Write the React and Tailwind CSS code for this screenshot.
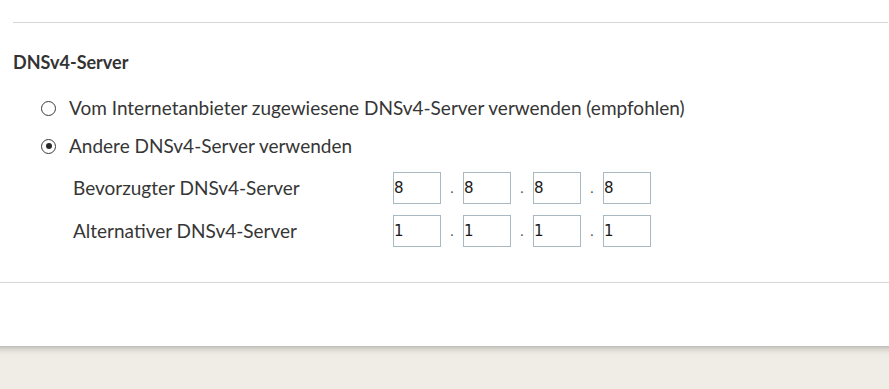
import React from "react";

const Radio = ({ checked }) => (
  <span className="flex h-[15px] w-[15px] items-center justify-center rounded-full border-[1.5px] border-[#3c3c3c]">
    {checked && <span className="h-[6px] w-[6px] rounded-full bg-[#2a2a2a]" />}
  </span>
);

const IpInput = ({ parts }) => (
  <div className="flex items-center">
    {parts.map((p, i) => (
      <React.Fragment key={i}>
        {i > 0 && <span className="w-[22px] text-center text-[14px] leading-none text-[#555]">.</span>}
        <div className="flex h-[32px] w-[48px] items-center border border-[#a9b9c2] bg-white font-['DejaVu_Sans',sans-serif] text-[15px] text-[#1a1a1a]">
          {p}
        </div>
      </React.Fragment>
    ))}
  </div>
);

export default function App() {
  return (
    <div className="flex h-[389px] w-[889px] flex-col overflow-hidden bg-white font-['Lato',sans-serif] text-[#363636]">
      <div className="pl-[13px] pr-px">
        <div className="h-[22px]" />
        <div className="border-t border-[#d6d6d6]" />
      </div>

      <div className="pl-[13px] pt-[29px]">
        <h2 className="text-[18px] font-bold leading-[20px] text-[#333]">DNSv4-Server</h2>
      </div>

      <div className="flex flex-col pl-[41px] pt-[24px]">
        <label className="flex h-[24px] items-center gap-[13px] text-[19px]">
          <Radio />
          <span>Vom Internetanbieter zugewiesene DNSv4-Server verwenden (empfohlen)</span>
        </label>
        <label className="mt-[14px] flex h-[24px] items-center gap-[13px] text-[19px]">
          <Radio checked />
          <span>Andere DNSv4-Server verwenden</span>
        </label>
      </div>

      <div className="mt-[14px] flex flex-col gap-[11px] pl-[73px] text-[19px]">
        <div className="flex items-center">
          <span className="w-[320px]">Bevorzugter DNSv4-Server</span>
          <IpInput parts={["8", "8", "8", "8"]} />
        </div>
        <div className="flex items-center">
          <span className="w-[320px]">Alternativer DNSv4-Server</span>
          <IpInput parts={["1", "1", "1", "1"]} />
        </div>
      </div>

      <div className="mt-[35px] border-t border-[#d6d6d6]" />
      <div className="flex-1 bg-white" />
      <div className="h-[43px] bg-[linear-gradient(to_bottom,#bdbdb7_0px,#d8d6cf_3px,#ebe8e1_7px,#f0ede6_10px)]" />
    </div>
  );
}
